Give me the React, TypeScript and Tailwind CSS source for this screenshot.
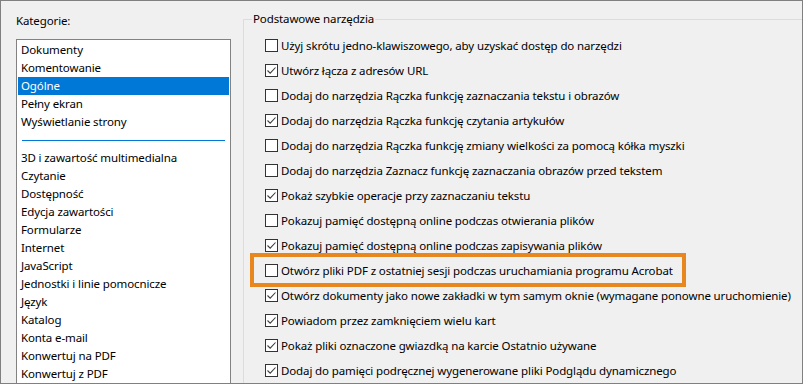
const topCategories = ["Dokumenty", "Komentowanie", "Ogólne", "Pełny ekran", "Wyświetlanie strony"];

const otherCategories = [
  "3D i zawartość multimedialna",
  "Czytanie",
  "Dostępność",
  "Edycja zawartości",
  "Formularze",
  "Internet",
  "JavaScript",
  "Jednostki i linie pomocnicze",
  "Język",
  "Katalog",
  "Konta e-mail",
  "Konwertuj na PDF",
  "Konwertuj z PDF",
];

const options = [
  { label: "Użyj skrótu jedno-klawiszowego, aby uzyskać dostęp do narzędzi", checked: false },
  { label: "Utwórz łącza z adresów URL", checked: true },
  { label: "Dodaj do narzędzia Rączka funkcję zaznaczania tekstu i obrazów", checked: false },
  { label: "Dodaj do narzędzia Rączka funkcję czytania artykułów", checked: true },
  { label: "Dodaj do narzędzia Rączka funkcję zmiany wielkości za pomocą kółka myszki", checked: false },
  { label: "Dodaj do narzędzia Zaznacz funkcję zaznaczania obrazów przed tekstem", checked: false },
  { label: "Pokaż szybkie operacje przy zaznaczaniu tekstu", checked: true },
  { label: "Pokazuj pamięć dostępną online podczas otwierania plików", checked: false },
  { label: "Pokazuj pamięć dostępną online podczas zapisywania plików", checked: true },
  { label: "Otwórz pliki PDF z ostatniej sesji podczas uruchamiania programu Acrobat", checked: false, highlight: true },
  { label: "Otwórz dokumenty jako nowe zakładki w tym samym oknie (wymagane ponowne uruchomienie)", checked: true },
  { label: "Powiadom przez zamknięciem wielu kart", checked: true },
  { label: "Pokaż pliki oznaczone gwiazdką na karcie Ostatnio używane", checked: true },
  { label: "Dodaj do pamięci podręcznej wygenerowane pliki Podglądu dynamicznego", checked: true },
];

function Checkbox({ checked }: { checked: boolean }) {
  return (
    <span className="flex h-[13px] w-[13px] shrink-0 items-center justify-center border border-[#333333] bg-white">
      {checked && (
        <svg width="11" height="11" viewBox="0 0 11 11" aria-hidden="true">
          <path d="M1.5 5.5 L4.2 8.2 L9.5 2.5" fill="none" stroke="#3c3c3c" strokeWidth="1.1" />
        </svg>
      )}
    </span>
  );
}

export default function App() {
  return (
    <div
      className="flex h-[384px] w-[803px] overflow-hidden border border-[#808080] bg-[#f0f0f0] text-[11.5px] tracking-[-0.12px] text-black"
      style={{ fontFamily: '"Noto Sans", "Liberation Sans", sans-serif' }}
    >
      <div className="flex w-[242px] shrink-0 flex-col pl-[15px]">
        <div className="mt-[12px] h-[16px] leading-[16px]">Kategorie:</div>
        <div className="mt-[10px] w-[215px] flex-1 border border-b-0 border-[#828282] bg-white p-px">
          {topCategories.map((c) => (
            <div
              key={c}
              className={
                c === "Ogólne"
                  ? "h-[18px] bg-[#0078d7] pl-[3px] leading-[18px] text-white"
                  : "h-[18px] pl-[3px] leading-[18px]"
              }
            >
              {c}
            </div>
          ))}
          <div className="h-[18px] pt-[9px]">
            <div className="mx-[4px] h-px bg-[#0078d7]" />
          </div>
          {otherCategories.map((c) => (
            <div key={c} className="h-[18px] pl-[3px] leading-[18px]">
              {c}
            </div>
          ))}
        </div>
      </div>

      <div className="relative mt-[18px] flex-1 border-l border-t border-[#dcdcdc] pt-[13px]">
        <span className="absolute left-[8px] top-[-9px] bg-[#f0f0f0] px-px leading-[16px]">Podstawowe narzędzia</span>
        {options.map((o) => (
          <div key={o.label} className="relative flex h-[25px] items-center gap-[3px] whitespace-nowrap pl-[21px]">
            {o.highlight && (
              <span className="absolute left-[6px] top-[-5px] h-[34px] w-[436px] border-4 border-[#e8871e]" />
            )}
            <Checkbox checked={o.checked} />
            <span className="leading-[16px]">{o.label}</span>
          </div>
        ))}
      </div>
    </div>
  );
}
